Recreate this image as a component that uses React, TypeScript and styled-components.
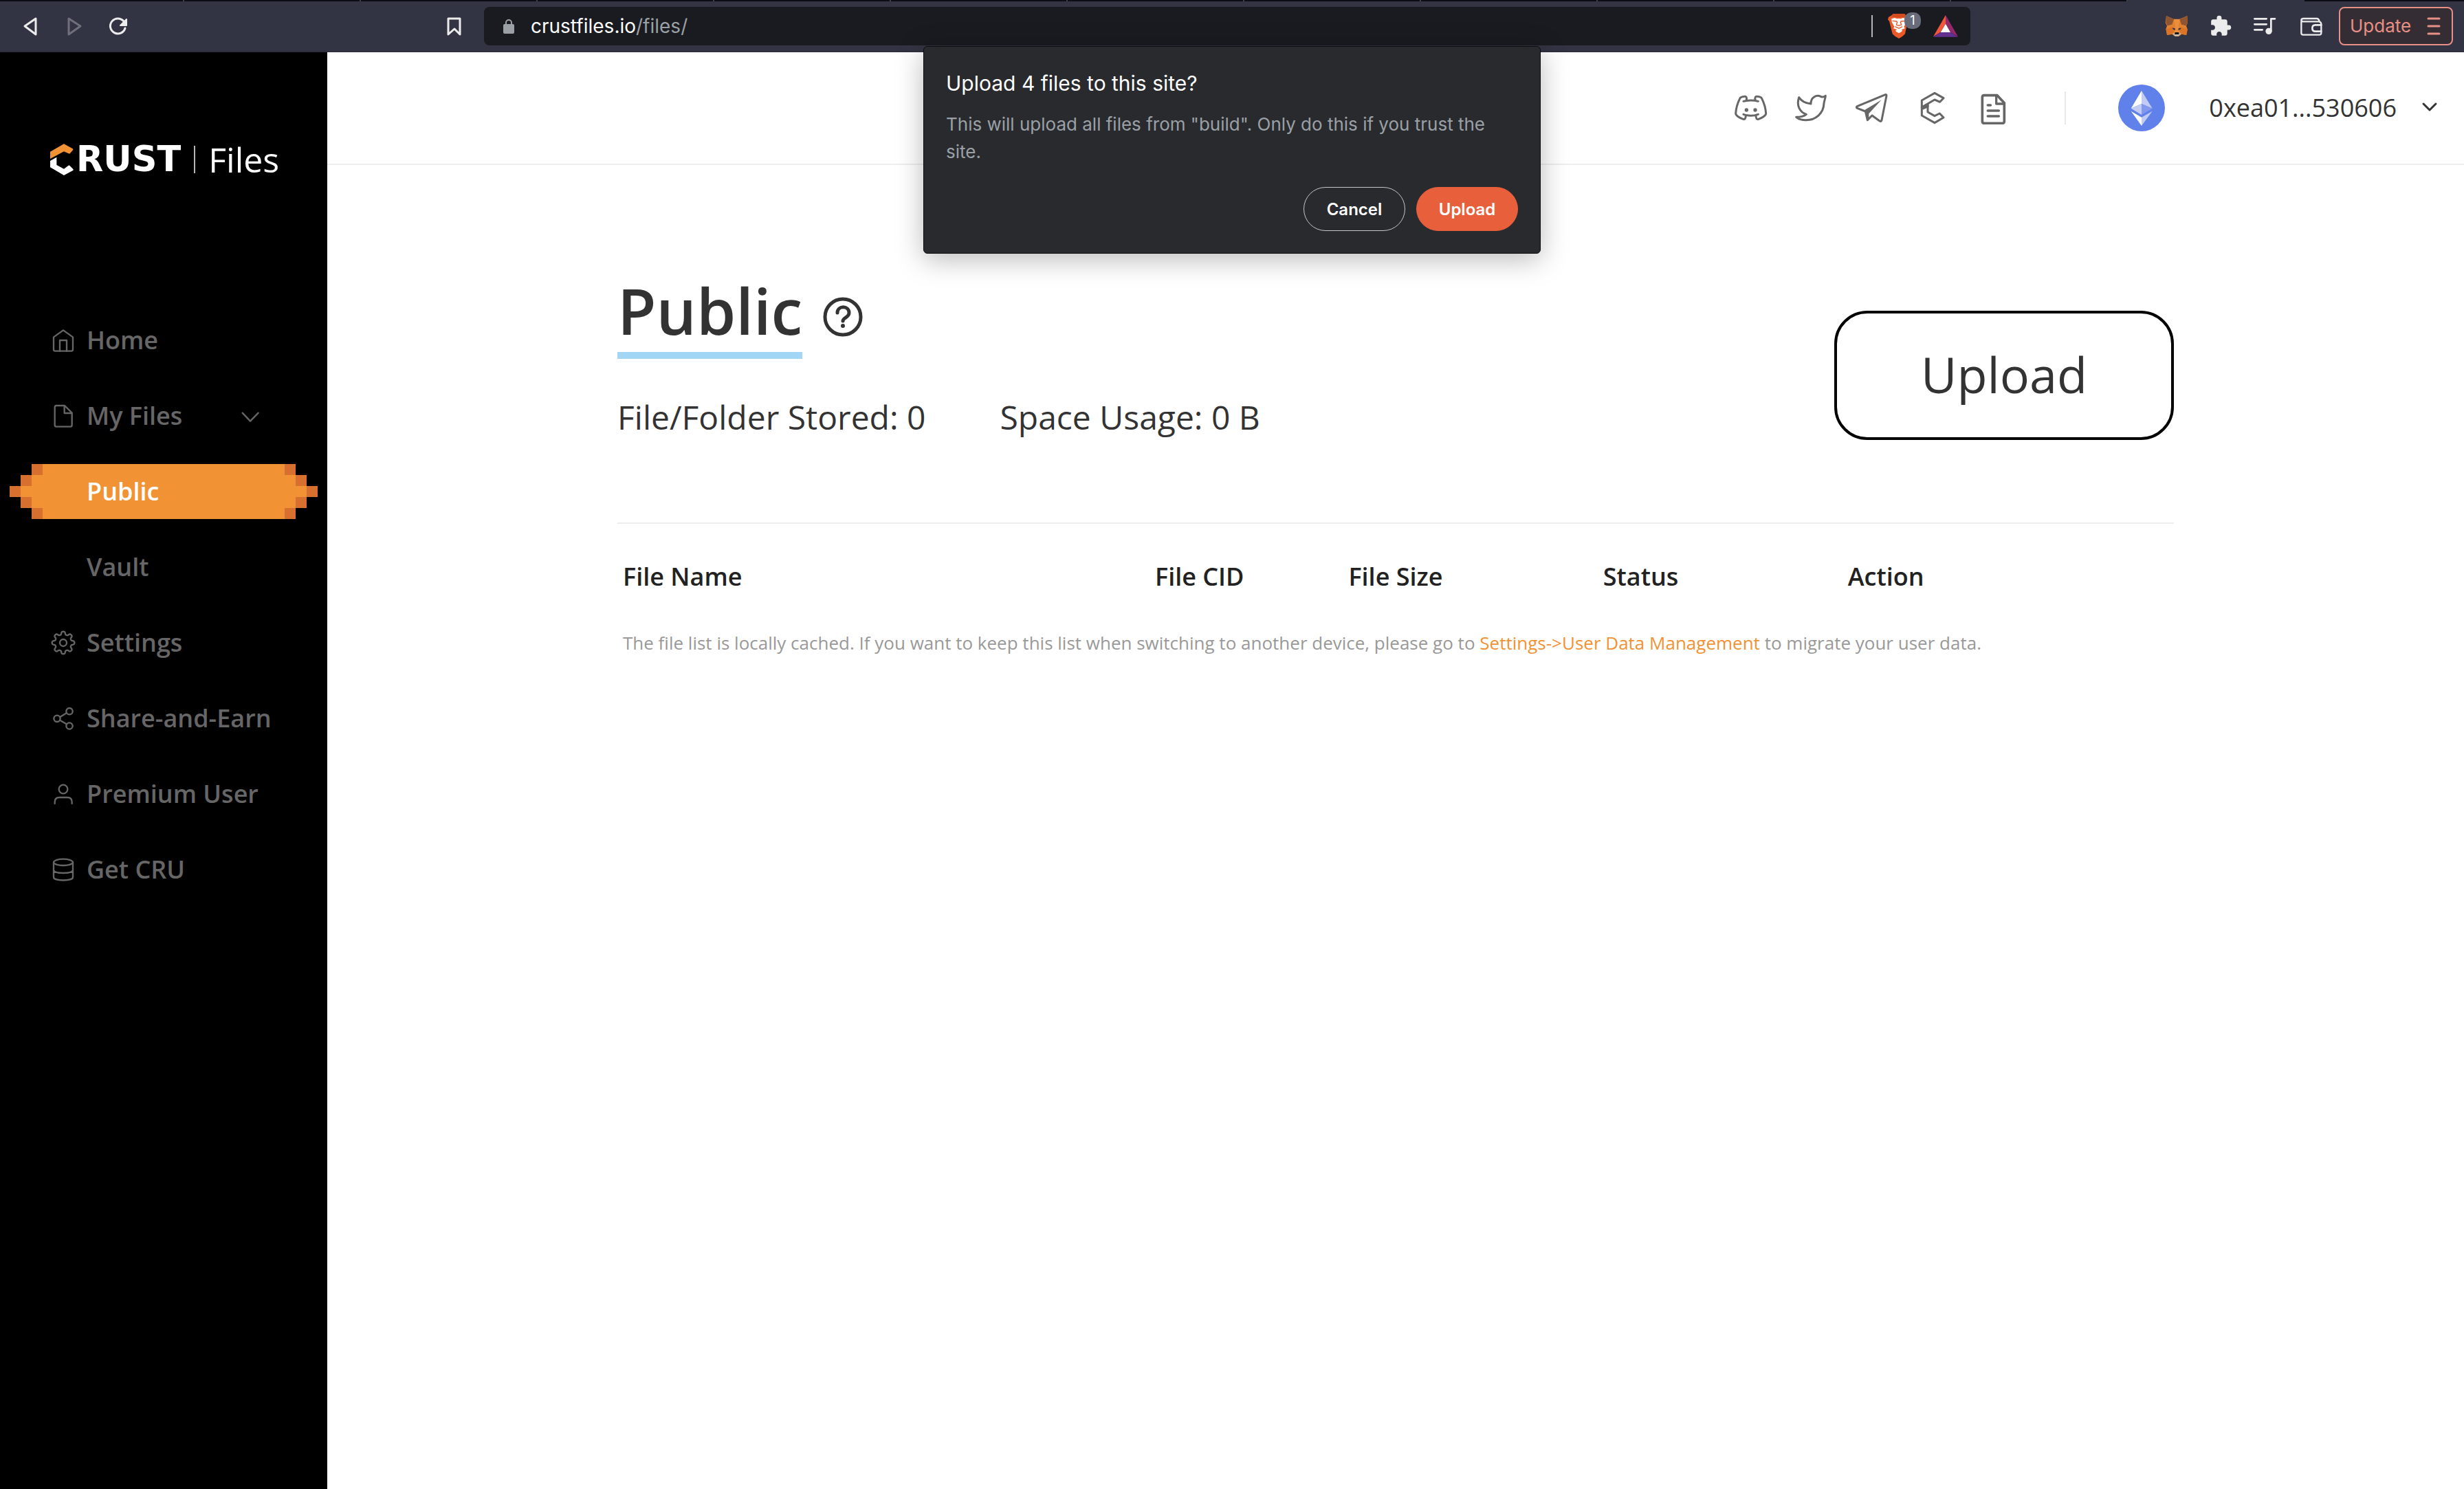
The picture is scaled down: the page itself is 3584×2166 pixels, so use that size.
import React from "react";
import styled, { createGlobalStyle, css } from "styled-components";

const color = {
  ink: "#333333",
  inkStrong: "#222222",
  muted: "#666666",
  note: "#999999",
  line: "#eeeeee",
  orange: "#f19235",
  orangeDark: "#d7702e",
  sky: "#a1d6f5",
  chrome: "#323443",
  chromeField: "#1a1b20",
  chromeIcon: "#ececec",
  chromeMuted: "#9aa0a6",
  update: "#e88f86",
  dialog: "#292a2e",
};

const uiFont = `Inter, "Liberation Sans", sans-serif`;
const siteFont = `"Open Sans", "Noto Sans", sans-serif`;

const GlobalStyle = createGlobalStyle`
  *, *::before, *::after { box-sizing: border-box; }
  body { margin: 0; background: #fff; color: ${color.ink}; font-family: ${siteFont}; }
  button { font: inherit; color: inherit; background: none; border: 0; padding: 0; cursor: pointer; }
  a { color: inherit; text-decoration: none; }
  h1, h2, p, ul, dl, dd { margin: 0; padding: 0; }
  ul { list-style: none; }
  svg { display: block; flex: none; }
`;

const Page = styled.div`
  min-height: 100vh;
  display: flex;
  flex-direction: column;
`;

/* Browser chrome */

const TabStrip = styled.div`
  display: flex;
  height: 2px;
  background: #0c0c14;
`;

const TabEdge = styled.div<{ $active?: boolean }>`
  flex: none;
  width: 257px;
  border-right: 2px solid #3d3e4a;
  &:first-child { width: 268px; }
  ${(p) => p.$active && css`background: ${color.chrome}; border-color: ${color.chrome};`}
`;

const Toolbar = styled.div`
  display: grid;
  grid-template-columns: 704px 1fr 718px;
  align-items: center;
  height: 74px;
  border-bottom: 2px solid #2d2f3d;
  background: ${color.chrome};
  color: ${color.chromeIcon};
  font-family: ${uiFont};
  font-size: 26px;
  line-height: 40px;
`;

const ToolbarStart = styled.div`
  display: flex;
  justify-content: space-between;
  padding: 0 26px;
`;

const ToolbarEnd = styled.div`
  display: flex;
  justify-content: flex-end;
  align-items: center;
  gap: 18px;
  padding-right: 16px;
`;

const IconGroup = styled.div`
  display: flex;
  gap: 28px;
`;

const ChromeButton = styled.button<{ $dim?: boolean }>`
  color: ${(p) => (p.$dim ? "#6f707b" : color.chromeIcon)};
`;

const AddressBar = styled.div`
  display: flex;
  align-items: center;
  height: 56px;
  padding: 0 18px 0 28px;
  border-radius: 8px;
  background: ${color.chromeField};
`;

const Address = styled.a`
  flex: 1;
  padding-left: 24px;
  color: ${color.chromeMuted};
  font-size: 28px;
`;

const Host = styled.span`
  color: #fff;
`;

const AddressRule = styled.span`
  width: 2px;
  height: 32px;
  margin-right: 20px;
  background: #b4b5b9;
`;

const ShieldButton = styled.button`
  position: relative;
  width: 52px;
  margin-right: 16px;
`;

const ShieldCount = styled.span`
  position: absolute;
  top: -2px;
  right: 2px;
  width: 24px;
  height: 24px;
  border-radius: 10px;
  background: #686b7a;
  color: #fff;
  font-size: 18px;
  line-height: 24px;
  text-align: center;
`;

const UpdateButton = styled.button`
  display: flex;
  align-items: center;
  justify-content: space-between;
  width: 166px;
  height: 56px;
  padding: 0 16px 0 14px;
  border: 2px solid ${color.update};
  border-radius: 8px;
  background: #342d33;
  color: ${color.update};
`;

/* Permission prompt */

const Prompt = styled.section`
  position: absolute;
  z-index: 2;
  top: 67px;
  left: 0;
  right: 0;
  width: 898px;
  margin: 0 auto;
  padding: 33px 32px 32px;
  border: 1px solid #0b0b0d;
  border-radius: 6px;
  background: ${color.dialog};
  box-shadow: 0 8px 40px rgba(0, 0, 0, 0.28);
  color: #fff;
  font-family: ${uiFont};
`;

const PromptTitle = styled.h2`
  font-size: 30px;
  font-weight: 400;
  line-height: 40px;
`;

const PromptText = styled.p`
  margin-top: 20px;
  color: ${color.chromeMuted};
  font-size: 26px;
  line-height: 40px;
`;

const PromptActions = styled.div`
  display: flex;
  justify-content: flex-end;
  gap: 16px;
  margin-top: 31px;
`;

const PromptButton = styled.button<{ $primary?: boolean }>`
  width: 148px;
  height: 64px;
  border: 1px solid ${(p) => (p.$primary ? "#e85f3c" : "#c4c6ca")};
  border-radius: 32px;
  background: ${(p) => (p.$primary ? "#e85f3c" : "transparent")};
  font-size: 24px;
  font-weight: 600;
`;

/* Site shell */

const Shell = styled.div`
  flex: 1;
  display: grid;
  grid-template-columns: 476px 1fr;
`;

const Sidebar = styled.aside`
  padding: 132px 14px 0;
  background: #000;
  color: ${color.muted};
`;

const Brand = styled.a`
  display: flex;
  align-items: center;
  height: 48px;
  padding-left: 59px;
  color: #fff;
  font-size: 50px;
  line-height: 48px;
`;

const BrandName = styled.span`
  margin-left: 4px;
  font-family: "DejaVu Sans", sans-serif;
  font-size: 51px;
  font-weight: 700;
`;

const BrandRule = styled.span`
  width: 2px;
  height: 40px;
  margin: 0 19px;
  background: #b5b5b5;
`;

const Nav = styled.ul`
  display: grid;
  gap: 30px;
  margin-top: 199px;
`;

const band = (c: string, inset: number, height: string) =>
  `linear-gradient(${c}, ${c}) center / calc(100% - ${inset * 2}px) ${height} no-repeat`;

const navRow = css<{ $active?: boolean; $nested?: boolean }>`
  display: flex;
  align-items: center;
  gap: 16px;
  width: 100%;
  height: 80px;
  padding-left: ${(p) => (p.$nested ? 112 : 60)}px;
  font-size: 36px;
  font-weight: 600;
  line-height: 50px;
  white-space: nowrap;
  ${(p) =>
    p.$active &&
    css`
      color: #fff;
      background: ${band(color.orange, 48, "80px")}, ${band(color.orange, 32, "48px")},
        ${band(color.orange, 16, "16px")}, ${band(color.orangeDark, 32, "80px")},
        ${band(color.orangeDark, 16, "48px")}, ${band(color.orangeDark, 0, "16px")};
    `}
`;

const NavLink = styled.a`
  ${navRow}
`;

const NavToggle = styled.button`
  ${navRow}
  padding-right: 80px;
  & > svg:last-child { margin-left: auto; }
`;

const TopBar = styled.header`
  display: flex;
  align-items: center;
  justify-content: flex-end;
  height: 164px;
  padding-right: 38px;
  border-bottom: 2px solid ${color.line};
`;

const Social = styled.nav`
  display: flex;
  gap: 40px;
  color: ${color.muted};
`;

const TopRule = styled.span`
  width: 2px;
  height: 48px;
  margin: 0 76px 0 80px;
  background: #e8e8e8;
`;

const Account = styled.button`
  display: flex;
  align-items: center;
  font-size: 36px;
  line-height: 50px;
`;

const AccountName = styled.span`
  margin: 0 36px 0 64px;
`;

/* Public files page */

const Content = styled.main`
  max-width: 2264px;
  margin: 0 auto;
  padding-top: 152px;
`;

const PageHead = styled.div`
  display: flex;
  justify-content: space-between;
  align-items: flex-end;
  padding-bottom: 120px;
  border-bottom: 2px solid ${color.line};
`;

const TitleRow = styled.div`
  display: flex;
  align-items: center;
  gap: 30px;
`;

const Title = styled.h1`
  border-bottom: 10px solid ${color.sky};
  font-size: 92px;
  font-weight: 600;
  line-height: 120px;
`;

const HelpButton = styled.button`
  padding-top: 8px;
`;

const Stats = styled.ul`
  display: flex;
  gap: 108px;
  margin-top: 52px;
  font-size: 48px;
  line-height: 66px;
`;

const UploadButton = styled.button`
  width: 494px;
  height: 188px;
  padding-bottom: 4px;
  border: 4px solid #000;
  border-radius: 48px;
  font-size: 72px;
  font-weight: 500;
`;

const FileTable = styled.table`
  width: 100%;
  table-layout: fixed;
  border-collapse: collapse;
  color: ${color.inkStrong};
  font-size: 36px;
  line-height: 50px;
`;

const HeadCell = styled.th<{ $width: string; $start?: boolean }>`
  width: ${(p) => p.$width};
  padding: 52px 8px 0;
  font-weight: 600;
  text-align: ${(p) => (p.$start ? "left" : "center")};
`;

const Note = styled.p`
  margin-top: 53px;
  padding: 0 8px;
  color: ${color.note};
  font-size: 26px;
  line-height: 36px;
`;

const NoteLink = styled.a`
  color: ${color.orange};
`;

/* Drawings */

const Line = styled.svg.attrs({ fill: "none", stroke: "currentColor", strokeLinecap: "round", strokeLinejoin: "round", "aria-hidden": true })``;

const gearPath = (() => {
  const pts: string[] = [];
  for (let i = 0; i < 240; i++) {
    const t = (i / 240) * Math.PI * 2;
    const r = 42.5 + 6.5 * Math.tanh(2 * Math.cos(8 * t));
    pts.push(`${(276 + r * Math.sin(t)).toFixed(1)} ${(162 - r * Math.cos(t)).toFixed(1)}`);
  }
  return `M${pts.join("L")}Z`;
})();

const NavIcon = ({ top, children }: { top: number; children: React.ReactNode }) => (
  <Line width="36" height="36" viewBox={`222 ${top} 108 108`} strokeWidth="7">
    {children}
  </Line>
);

const icons = {
  home: (
    <NavIcon top={108}>
      <path d="M234 148L276 118l42 30v54q0 7-7 7h-70q-7 0-7-7z" />
      <path d="M261 209v-47h30v47" />
    </NavIcon>
  ),
  file: (
    <NavIcon top={438}>
      <path d="M282 447h-36q-7 0-7 8v77q0 7 7 7h61q7 0 7-7v-53z" />
      <path d="M281 448v32h32" />
    </NavIcon>
  ),
  settings: (
    <NavIcon top={108}>
      <path d={gearPath} />
      <circle cx="276" cy="162" r="15" />
    </NavIcon>
  ),
  share: (
    <NavIcon top={438}>
      <circle cx="303" cy="461" r="14" />
      <circle cx="249" cy="493" r="14" />
      <circle cx="303" cy="525" r="14" />
      <path d="M262 486l28-17M262 500l28 17" />
    </NavIcon>
  ),
  user: (
    <NavIcon top={768}>
      <circle cx="276" cy="801" r="19" />
      <path d="M239 864v-7q0-20 20-20h35q20 0 20 20v7" />
    </NavIcon>
  ),
  database: (
    <NavIcon top={1098}>
      <ellipse cx="276" cy="1120" rx="42" ry="14" />
      <path d="M234 1120v65c0 18 84 18 84 0v-65M234 1155c6 16 78 16 84 0" />
    </NavIcon>
  ),
};

const SocialIcon = ({ left, children }: { left: number; children: React.ReactNode }) => (
  <Line width="48" height="48" viewBox={`${left} 69 144 144`} strokeWidth="9">
    {children}
  </Line>
);

const social = [
  {
    name: "Discord",
    art: (
      <SocialIcon left={36}>
        <path d="M88 106C90 94 86 90 80 91 66 92 62 94 59 100 50 118 42 145 41 166 41 173 56 184 74 190 82 192 84 186 85 176" />
        <path d="M126 106C124 94 128 90 134 91 148 92 152 94 155 100 164 118 172 145 173 166 173 173 158 184 140 190 132 192 130 186 129 176" />
        <path d="M75 112Q107 104 139 112M75 169Q107 181 139 169" />
        <circle cx="88" cy="150" r="8" fill="currentColor" stroke="none" />
        <circle cx="126" cy="150" r="8" fill="currentColor" stroke="none" />
      </SocialIcon>
    ),
  },
  {
    name: "Twitter",
    art: (
      <SocialIcon left={300}>
        <path d="M317 95C306 128 318 158 349 169 338 178 322 181 305 181 315 190 330 194 348 194 390 194 424 165 426 122 426 112 432 102 433 88 426 94 418 94 412 91 394 82 368 94 369 123 346 121 328 112 317 95Z" />
      </SocialIcon>
    ),
  },
  {
    name: "Telegram",
    art: (
      <SocialIcon left={564}>
        <path d="M694 83L571 134q-6 4 0 8l36 14 9 38 20-20 33 24q7 4 9-4l21-106q0-6-5-5z" />
        <path d="M677 106L604 150l12 44 6-6v-22z" fill="currentColor" stroke="none" />
      </SocialIcon>
    ),
  },
  {
    name: "Crust",
    art: (
      <SocialIcon left={828}>
        <path d="M853 138v-30l56-32 39 22-16 17-23-10z" />
        <path d="M853 138v36l56 32 39-23-17-18-22 11-30-17v-30" />
        <path d="M853 138l26-13v10l-20 9z" fill="currentColor" />
      </SocialIcon>
    ),
  },
  {
    name: "Docs",
    art: (
      <SocialIcon left={1092}>
        <path d="M1182 86h-57q-8 0-8 9v104q0 9 8 9h80q8 0 8-9v-80z" strokeWidth="11" />
        <path d="M1178 90v33h34" strokeWidth="10" />
        <path d="M1141 129h12M1141 153h48M1141 177h48" strokeWidth="11" />
      </SocialIcon>
    ),
  },
];

const EthAvatar = () => (
  <svg width="68" height="68" viewBox="1140 368 204 204" aria-hidden>
    <circle cx="1242" cy="470" r="102" fill="#6080ea" />
    <path d="M1242 395v57l-46 20z" fill="#fff" />
    <path d="M1242 395l47 77-47-20z" fill="#c0cbf6" />
    <path d="M1196 472l46-20v48z" fill="#c0cbf6" />
    <path d="M1289 472l-47-20v48z" fill="#8198ee" />
    <path d="M1196 484l46 27v37z" fill="#fff" />
    <path d="M1289 484l-47 27v37z" fill="#c0cbf6" />
  </svg>
);

const Fox = () => (
  <svg width="36" height="36" viewBox="1344 60 108 108" aria-hidden>
    <path d="M1353 69l32 14h26l33-14 2 30-6 14 5 14-5 26-20-4-12 9h-18l-12-9-22 4-5-26 5-14-7-14z" fill="#e2812f" />
    <path d="M1353 69l33 16-8 22-20 5-7-14z" fill="#8e5530" />
    <path d="M1444 69l-33 16 8 22 20 5 7-14z" fill="#8e5530" />
    <path d="M1386 84h26l-6 28 4 30h-22l4-30z" fill="#ec8f3c" />
    <path d="M1352 127l26-8 12 12-12 18-21 4zM1446 127l-26-8-12 12 12 18 21 4z" fill="#dc7427" />
    <path d="M1379 121l12 3 1 7-9-2zM1418 121l-12 3-1 7 9-2z" fill="#3a3340" />
    <path d="M1381 147l9-3h18l9 3-11 11h-15z" fill="#c9bdb0" />
    <path d="M1391 141h16l2 9h-20z" fill="#17171b" />
  </svg>
);

const BraveLion = () => (
  <svg width="36" height="36" viewBox="132 60 108 108" aria-hidden>
    <path d="M162 60h48l8 10 8 2 2 14-4 6-11 56q-12 14-27 20-16-6-28-20l-14-56-6-6 3-12 9-4z" fill="#ea5a29" />
    <path d="M162 60h48l10 12-18 4h-32l-18-4z" fill="#d64a1f" />
    <path d="M154 82l14-4 8 3h20l8-3 14 4 2 14-12 20 4 8-12 4-12 10-12-10-14-4 4-8-11-20z" fill="#fff" />
    <path d="M171 133l15-8 16 8-5 6-11 6-11-6z" fill="#fff" />
    <path d="M158 91l18 2 3 4-4 11 11 4 11-4-4-11 3-4 18-2M170 116l16 8 15-8" fill="none" stroke="#e4572a" strokeWidth="4" />
  </svg>
);

const BatTriangle = () => (
  <svg width="36" height="36" viewBox="336 60 108 108" aria-hidden>
    <path d="M390 66L336 160l32-20 22-36z" fill="#f0563a" />
    <path d="M390 66l54 94-33-20-21-36z" fill="#95286a" />
    <path d="M336 161h108l-33-21h-43z" fill="#63308f" />
    <path d="M390 104l21 37h-43z" fill="#fff" />
  </svg>
);

const navItems = [
  { label: "Home", icon: icons.home },
  { label: "My Files", icon: icons.file, toggle: true },
  { label: "Public", nested: true, active: true },
  { label: "Vault", nested: true },
  { label: "Settings", icon: icons.settings },
  { label: "Share-and-Earn", icon: icons.share },
  { label: "Premium User", icon: icons.user },
  { label: "Get CRU", icon: icons.database },
];

const columns = [
  { label: "File Name", width: "31.4%", start: true },
  { label: "File CID", width: "12%" },
  { label: "File Size", width: "13.2%" },
  { label: "Status", width: "18.3%" },
  { label: "Action", width: "13.2%" },
];

const BrowserChrome = () => (
  <div>
    <TabStrip>
      {Array.from({ length: 12 }, (_, i) => (
        <TabEdge key={i} />
      ))}
      <TabEdge $active />
    </TabStrip>
    <Toolbar>
      <ToolbarStart>
        <IconGroup>
          <ChromeButton aria-label="Back">
            <Line width="36" height="36" viewBox="0 0 36 36" strokeWidth="3">
              <path d="M26 7v23L10 18z" />
            </Line>
          </ChromeButton>
          <ChromeButton aria-label="Forward" $dim>
            <Line width="36" height="36" viewBox="0 0 36 36" strokeWidth="3">
              <path d="M10 7v23l17-12z" />
            </Line>
          </ChromeButton>
          <ChromeButton aria-label="Reload">
            <Line width="36" height="36" viewBox="0 0 36 36" strokeWidth="3">
              <path d="M26 11A11 11 0 1 0 28 21" />
              <path d="M30 8v9h-9z" fill="currentColor" strokeWidth="2" />
            </Line>
          </ChromeButton>
        </IconGroup>
        <ChromeButton aria-label="Bookmark">
          <Line width="36" height="36" viewBox="0 0 36 36" strokeWidth="3">
            <path d="M10 7h17v23l-8-8-9 8z" />
          </Line>
        </ChromeButton>
      </ToolbarStart>
      <AddressBar>
        <svg width="16" height="22" viewBox="0 0 16 22" aria-hidden>
          <path d="M4 9V6a4 4 0 0 1 8 0v3" fill="none" stroke={color.chromeMuted} strokeWidth="2" />
          <rect y="8" width="16" height="14" rx="2" fill={color.chromeMuted} />
        </svg>
        <Address href="#files">
          <Host>crustfiles.io</Host>/files/
        </Address>
        <AddressRule />
        <ShieldButton aria-label="Shields">
          <BraveLion />
          <ShieldCount>1</ShieldCount>
        </ShieldButton>
        <ChromeButton aria-label="Rewards">
          <BatTriangle />
        </ChromeButton>
      </AddressBar>
      <ToolbarEnd>
        <IconGroup>
          <ChromeButton aria-label="MetaMask">
            <Fox />
          </ChromeButton>
          <ChromeButton aria-label="Extensions">
            <svg width="36" height="36" viewBox="-1 -1 26 26" fill="currentColor" aria-hidden>
              <path d="M20.5 11H19V7c0-1.1-.9-2-2-2h-4V3.5a2.5 2.5 0 0 0-5 0V5H4c-1.1 0-1.99.9-1.99 2v3.8H3.5c1.49 0 2.7 1.21 2.7 2.7s-1.21 2.7-2.7 2.7H2V20c0 1.1.9 2 2 2h3.8v-1.5c0-1.49 1.21-2.7 2.7-2.7s2.7 1.21 2.7 2.7V22H17c1.1 0 2-.9 2-2v-4h1.5a2.5 2.5 0 0 0 0-5z" />
            </svg>
          </ChromeButton>
          <ChromeButton aria-label="Media controls">
            <Line width="36" height="36" viewBox="528 60 108 108" strokeWidth="8">
              <path d="M538 82h52M538 106h52M538 130h34M610 136V82h17" />
              <circle cx="600" cy="136" r="14" fill="currentColor" stroke="none" />
            </Line>
          </ChromeButton>
          <ChromeButton aria-label="Wallet">
            <Line width="44" height="36" viewBox="720 60 132 108" strokeWidth="7">
              <path d="M742 94v50q0 8 8 8h70q9 0 9-8v-38q0-10-9-12h-70q-8 0-8-6t8-7h60q8 0 11 12" />
              <path d="M829 109h-26q-13 0-13 14t13 14h26" strokeWidth="8" />
            </Line>
          </ChromeButton>
        </IconGroup>
        <UpdateButton>
          Update
          <Line width="20" height="28" viewBox="0 0 20 28" strokeWidth="3">
            <path d="M2 3h16M2 14h16M2 25h16" />
          </Line>
        </UpdateButton>
      </ToolbarEnd>
    </Toolbar>
  </div>
);

const UploadPrompt = () => (
  <Prompt role="dialog" aria-labelledby="prompt-title">
    <PromptTitle id="prompt-title">Upload 4 files to this site?</PromptTitle>
    <PromptText>This will upload all files from "build". Only do this if you trust the site.</PromptText>
    <PromptActions>
      <PromptButton>Cancel</PromptButton>
      <PromptButton $primary>Upload</PromptButton>
    </PromptActions>
  </Prompt>
);

export default function App() {
  return (
    <Page>
      <GlobalStyle />
      <BrowserChrome />
      <UploadPrompt />
      <Shell>
        <Sidebar>
          <Brand href="#home">
            <svg width="34" height="46" viewBox="39 57 102 138" aria-hidden>
              <path d="M39 92L99 58l38 21q4 3 1 6l-12 14q-3 3-7 1l-20-9-60 32z" fill={color.orange} />
              <path d="M39 132l28-16v34l32 17 19-14q4-3 7 1l14 14q3 4-1 6l-39 21-60-35z" fill="#fff" />
            </svg>
            <BrandName>RUST</BrandName>
            <BrandRule />
            Files
          </Brand>
          <Nav>
            {navItems.map((item) => (
              <li key={item.label}>
                {item.toggle ? (
                  <NavToggle aria-expanded="true">
                    {item.icon}
                    {item.label}
                    <Line width="36" height="36" viewBox="1038 438 108 108" strokeWidth="7">
                      <path d="M1058 479l34 36 35-36" />
                    </Line>
                  </NavToggle>
                ) : (
                  <NavLink href="#nav" $nested={item.nested} $active={item.active}>
                    {item.icon}
                    {item.label}
                  </NavLink>
                )}
              </li>
            ))}
          </Nav>
        </Sidebar>
        <div>
          <TopBar>
            <Social>
              {social.map((s) => (
                <a key={s.name} href="#social" aria-label={s.name}>
                  {s.art}
                </a>
              ))}
            </Social>
            <TopRule />
            <Account>
              <EthAvatar />
              <AccountName>0xea01...530606</AccountName>
              <Line width="24" height="24" viewBox="0 0 24 24" strokeWidth="3">
                <path d="M3 6l9 9 9-9" />
              </Line>
            </Account>
          </TopBar>
          <Content>
            <PageHead>
              <div>
                <TitleRow>
                  <Title>Public</Title>
                  <HelpButton aria-label="Help">
                    <Line width="58" height="58" viewBox="0 0 58 58" strokeWidth="5">
                      <circle cx="29" cy="29" r="26" />
                      <path d="M21 23c0-11 17-11 17 0 0 7-9 7-9 12" />
                      <circle cx="29" cy="42" r="3" fill="currentColor" stroke="none" />
                    </Line>
                  </HelpButton>
                </TitleRow>
                <Stats>
                  <li>File/Folder Stored: 0</li>
                  <li>Space Usage: 0 B</li>
                </Stats>
              </div>
              <UploadButton>Upload</UploadButton>
            </PageHead>
            <FileTable>
              <thead>
                <tr>
                  {columns.map((c) => (
                    <HeadCell key={c.label} scope="col" $width={c.width} $start={c.start}>
                      {c.label}
                    </HeadCell>
                  ))}
                  <HeadCell as="td" $width="11.9%" />
                </tr>
              </thead>
            </FileTable>
            <Note>
              The file list is locally cached. If you want to keep this list when switching to another device, please go to{" "}
              <NoteLink href="#settings">Settings-&gt;User Data Management</NoteLink> to migrate your user data.
            </Note>
          </Content>
        </div>
      </Shell>
    </Page>
  );
}
